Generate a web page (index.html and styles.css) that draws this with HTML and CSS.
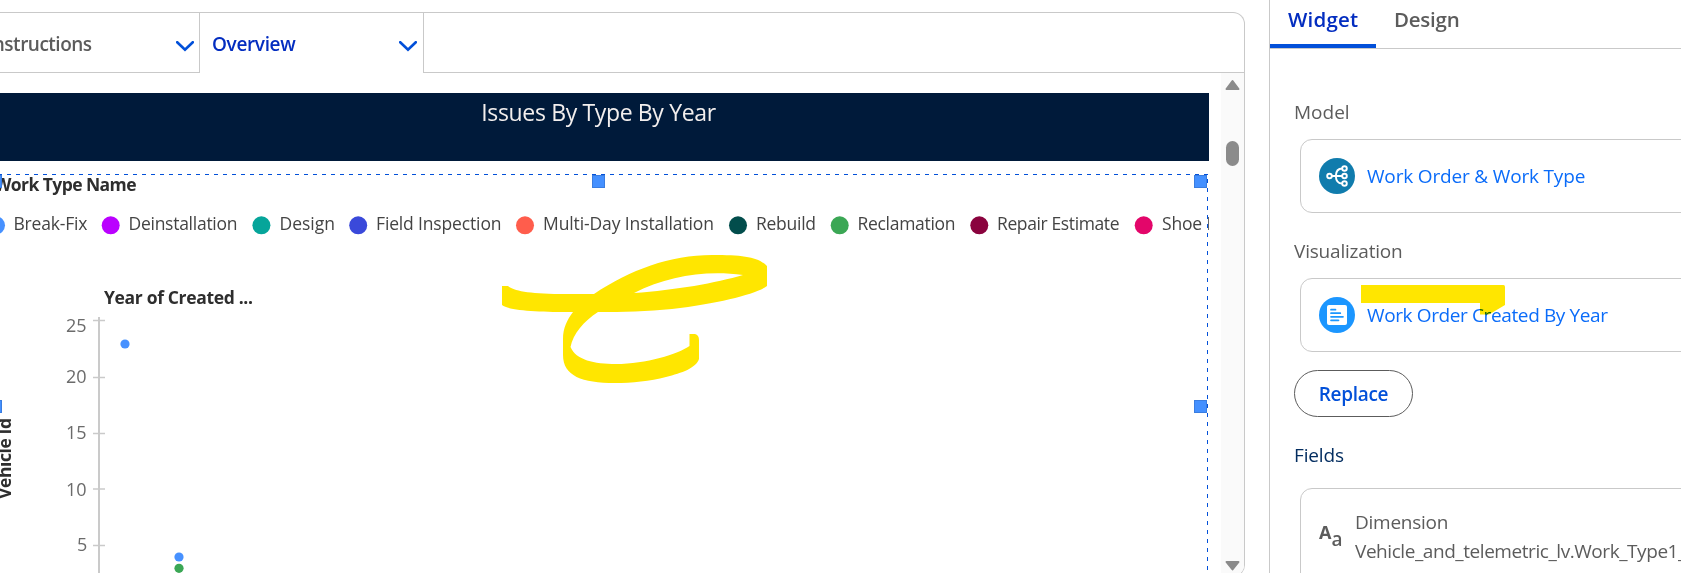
FILE: index.html
```html
<!DOCTYPE html>
<html lang="en">
<head>
<meta charset="utf-8">
<title>Dashboard editor</title>
<link rel="stylesheet" href="styles.css">
</head>
<body>
<div class="app">
  <main class="canvas">
    <nav class="tabs">
      <div class="tab tab-first"><span class="tab-label label-instructions">Instructions</span>
        <svg class="chevron" width="18" height="11" viewBox="0 0 18 11"><path d="M1.200 1.200 9 8.800l7.800-7.600"/></svg></div>
      <div class="tab tab-active"><span class="tab-label label-overview">Overview</span>
        <svg class="chevron" width="18" height="11" viewBox="0 0 18 11"><path d="M1.200 1.200 9 8.800l7.800-7.600"/></svg></div>
      <div class="tab-rest"></div>
    </nav>
    <div class="stage">
      <div class="page">
        <h1 class="banner">Issues By Type By Year</h1>
        <svg class="chart" width="1209" height="412" viewBox="0 161 1209 412">
          <g class="heading">
            <text x="-5.500" y="191" textLength="142">Work Type Name</text>
            <text x="104" y="303.500" textLength="149">Year of Created ...</text>
            <text transform="translate(10.500 499) rotate(-90)" textLength="81">Vehicle Id</text>
          </g>
          <g>
            <circle cx="-4" cy="225.300" r="9" fill="#4791ff"/>
            <circle cx="110.700" cy="225.300" r="9" fill="#ba01ff"/>
            <circle cx="261.400" cy="225.300" r="9" fill="#06a59a"/>
            <circle cx="358.200" cy="225.300" r="9" fill="#3a49da"/>
            <circle cx="525" cy="225.300" r="9" fill="#ff5d4c"/>
            <circle cx="738" cy="225.300" r="9" fill="#024d4c"/>
            <circle cx="839.700" cy="225.300" r="9" fill="#3ba755"/>
            <circle cx="979.300" cy="225.300" r="9" fill="#8a033e"/>
            <circle cx="1143.700" cy="225.300" r="9" fill="#e3066a"/>
          </g>
          <g class="legend">
            <text x="13.500" y="230" textLength="74">Break-Fix</text>
            <text x="128.500" y="230" textLength="109">Deinstallation</text>
            <text x="279.500" y="230" textLength="55.500">Design</text>
            <text x="376" y="230" textLength="125.500">Field Inspection</text>
            <text x="543" y="230" textLength="171">Multi-Day Installation</text>
            <text x="756" y="230" textLength="60">Rebuild</text>
            <text x="857.500" y="230" textLength="98">Reclamation</text>
            <text x="997" y="230" textLength="122.500">Repair Estimate</text>
            <text x="1162" y="230" textLength="40">Shoe</text>
            <text x="1206.500" y="230">I</text>
          </g>
          <path class="axis" d="M99 317V573"/>
          <path class="ticks" d="M93 320.500h12M93 377.500h12M93 433.500h12M93 489h12M93 545.500h12"/>
          <g class="scale">
            <text x="66" y="331.500" textLength="20.500">25</text>
            <text x="66" y="382.500" textLength="20.500">20</text>
            <text x="66" y="438.500" textLength="20.500">15</text>
            <text x="66" y="495.500" textLength="20.500">10</text>
            <text x="77" y="551">5</text>
          </g>
          <circle cx="125" cy="344" r="4.600" fill="#4791ff"/>
          <circle cx="179" cy="557" r="4.600" fill="#4791ff"/>
          <circle cx="179" cy="568.300" r="4.600" fill="#3ba755"/>
          <g class="handles">
            <rect x="-10.500" y="175.500" width="12" height="12"/>
            <rect x="592.500" y="175.500" width="12" height="12"/>
            <rect x="1194.500" y="175.500" width="12" height="12"/>
            <rect x="-10.500" y="400.500" width="12" height="12"/>
            <rect x="1194.500" y="400.500" width="12" height="12"/>
          </g>
          <path class="outline" d="M-2 174.500H1208M1207.500 179V573"/>
        </svg>
      </div>
      <svg class="scrollbar" width="23" height="504" viewBox="0 0 23 504">
        <path d="M11.500 8 17.500 16H5.500Z"/>
        <rect x="5" y="68" width="13" height="25" rx="6.500"/>
        <path d="M11.500 496.500 17.500 489H5.500Z"/>
      </svg>
    </div>
  </main>

  <aside class="inspector">
    <nav class="modes">
      <span class="mode mode-active">Widget</span>
      <span class="mode mode-design">Design</span>
    </nav>
    <section class="group">
      <h2 class="caption">Model</h2>
      <div class="card">
        <svg class="badge" width="36" height="36" viewBox="0 0 36 36">
          <circle cx="18" cy="18" r="18" fill="#107cad"/>
          <g fill="none" stroke="#fff" stroke-width="1.900"><circle cx="10.500" cy="18" r="2.300"/><circle cx="25.500" cy="10.500" r="2.300"/><circle cx="25.500" cy="18" r="2.300"/><circle cx="25.500" cy="25.500" r="2.300"/><path d="M12.800 18H23.200M23.200 10.500C19 10.500 17 13 16.800 18c.2 5 2.200 7.500 6.400 7.500"/></g>
        </svg>
        <a class="link link-model">Work Order &amp; Work Type</a>
      </div>
    </section>
    <section class="group">
      <h2 class="caption caption-vis">Visualization</h2>
      <div class="card">
        <svg class="badge" width="36" height="36" viewBox="0 0 36 36">
          <circle cx="18" cy="18" r="18" fill="#1b96ff"/>
          <rect x="8" y="8" width="20" height="20" rx="2" fill="#fff"/>
          <path d="M12 12.700h4.500M12 16.200h9.300M12 19.800h12M12 23.300h7.500" fill="none" stroke="#1b96ff" stroke-width="1.700" stroke-linecap="round"/>
        </svg>
        <a class="link link-vis">Work Order Created By Year</a>
      </div>
      <button class="replace">Replace</button>
    </section>
    <section class="group">
      <h2 class="caption caption-fields">Fields</h2>
      <div class="card card-field">
        <div class="aa"><span class="aa-big">A</span><span class="aa-small">a</span></div>
        <div class="field"><div class="field-kind">Dimension</div><div class="field-name">Vehicle_and_telemetric_lv.Work_Type1_</div></div>
      </div>
    </section>
  </aside>
</div>

<svg class="marker" width="1681" height="573" viewBox="0 0 1681 573">
  <path fill-rule="evenodd" d="M502 286h6C514 291 528 293.500 560 294H594C630 270 670 255 712 255C744 255 758 257 767 266V286C756 294 720 303 672 309C648 311.500 622 312 598 312C584 321 573 334 570.500 347C576 360 594 364 616 364C646 364 678 354 689.500 346V334H695Q699 335 699 340V359C696 368 682 373 666 377C650 381 632 383 615 383C582 383 563 376 563 355V339C563 328 567 320 573 312C540 312 510 311 502 305ZM634 293C676 290 716 283 743 275C705 270 668 276 634 293Z"/>
  <path d="M1361 285H1503.500Q1505 285 1505 287V305L1489 314.500H1480V303H1361Z"/>
</svg>
</body>
</html>
```
FILE: styles.css
```css
* { box-sizing: border-box; }
body { margin: 0; height: 573px; overflow: hidden; background: #fff; font-family: "Open Sans", "Noto Sans", sans-serif; font-size: 19px; color: #5c5c5c; }
h1, h2 { margin: 0; font-weight: 400; }
.app { display: flex; height: 573px; overflow: hidden; }

.canvas { flex: none; width: 1245px; height: 565px; margin-top: 12px; border: 1px solid #c9c9c9; border-left: 0; border-radius: 0 12px 12px 0; overflow: hidden; }
.tabs { display: flex; height: 60px; }
.tab { display: flex; align-items: center; justify-content: space-between; border-right: 1px solid #c9c9c9; font-weight: 600; line-height: 26px; padding-top: 2px; }
.tab-first { width: 200px; border-bottom: 1px solid #c9c9c9; padding-right: 5px; }
.tab-active { width: 224px; padding: 2px 6px 1px 12px; color: #032dc0; }
.tab-rest { flex: 1; border-bottom: 1px solid #c9c9c9; }
.label-instructions { margin-left: -12.500px; letter-spacing: -.5px; }
.label-overview { letter-spacing: -.35px; }
.chevron { margin-top: 5px; fill: none; stroke: #0250d9; stroke-width: 2.600; stroke-linecap: round; stroke-linejoin: miter; }

.stage { display: flex; justify-content: space-between; height: 504px; }
.page { width: 1209px; padding-top: 20px; }
.banner { height: 68px; padding-right: 12px; background: #001a3a; color: #f3efee; font-size: 23px; line-height: 39px; letter-spacing: -.35px; text-align: center; }
.chart { display: block; }
.heading { font-size: 17.500px; font-weight: 700; fill: #2e2e2e; }
.legend { font-size: 17.500px; fill: #444; }
.scale { font-size: 18px; fill: #6b6b6b; }
.axis { stroke: #cacaca; stroke-width: 2; }
.ticks { fill: none; stroke: #cacaca; stroke-width: 1.500; }
.handles { fill: #4490ff; stroke: #3a7de0; }
.outline { fill: none; stroke: #0250d9; stroke-dasharray: 4 5; }
.scrollbar { flex: none; background: #fafafa; fill: #8b8b8b; stroke: #8b8b8b; stroke-linejoin: round; stroke-width: 2; }
.scrollbar rect { stroke: none; }

.inspector { flex: none; width: 412px; margin-left: 24px; border-left: 1px solid #c9c9c9; }
.modes { display: flex; height: 49px; border-bottom: 1px solid #c9c9c9; font-size: 20.500px; font-weight: 600; line-height: 38px; }
.mode { height: 48px; }
.mode-active { width: 106px; padding-left: 18px; border-bottom: 4px solid #0250d9; color: #032dc0; letter-spacing: .2px; }
.mode-design { padding-left: 18px; letter-spacing: -.25px; }
.group { padding-left: 24px; }
.caption { font-size: 19px; line-height: 26px; }
.card { display: flex; align-items: center; width: 440px; height: 74px; margin: 14px 0 0 6px; padding-left: 18px; border: 1px solid #c9c9c9; border-radius: 12px; }
.modes + .group { padding-top: 50px; }
.group + .group { padding-top: 25px; }
.badge { flex: none; margin-right: 12px; }
.link { color: #0b6cf9; line-height: 26px; white-space: nowrap; }
.link-model { letter-spacing: -.17px; }
.link-vis { letter-spacing: -.38px; }
.caption-vis { letter-spacing: -.2px; }
.replace { display: block; width: 119px; height: 47px; margin-top: 18px; padding: 0; border: 1px solid #5c5c5c; border-radius: 24px; background: #fff; color: #0250d9; font: 600 19px/26px "Open Sans", sans-serif; letter-spacing: -.3px; }
.caption-fields { color: #032d60; letter-spacing: -.15px; }
.card-field { align-items: flex-start; height: 110px; padding-top: 19px; margin-top: 20px; }
.group .replace + .caption { margin: 0; }
.aa { display: flex; width: 36px; font-weight: 700; }
.aa-big { font-size: 18px; line-height: 26px; margin-top: 11px; }
.aa-small { font-size: 19px; line-height: 26px; margin-top: 18px; font-weight: 600; }
.field { line-height: 29px; white-space: nowrap; }
.field-kind { letter-spacing: -.25px; }
.field-name { letter-spacing: -.44px; }

.marker { position: absolute; left: 0; top: 0; fill: #ffe600; mix-blend-mode: multiply; pointer-events: none; }
```
